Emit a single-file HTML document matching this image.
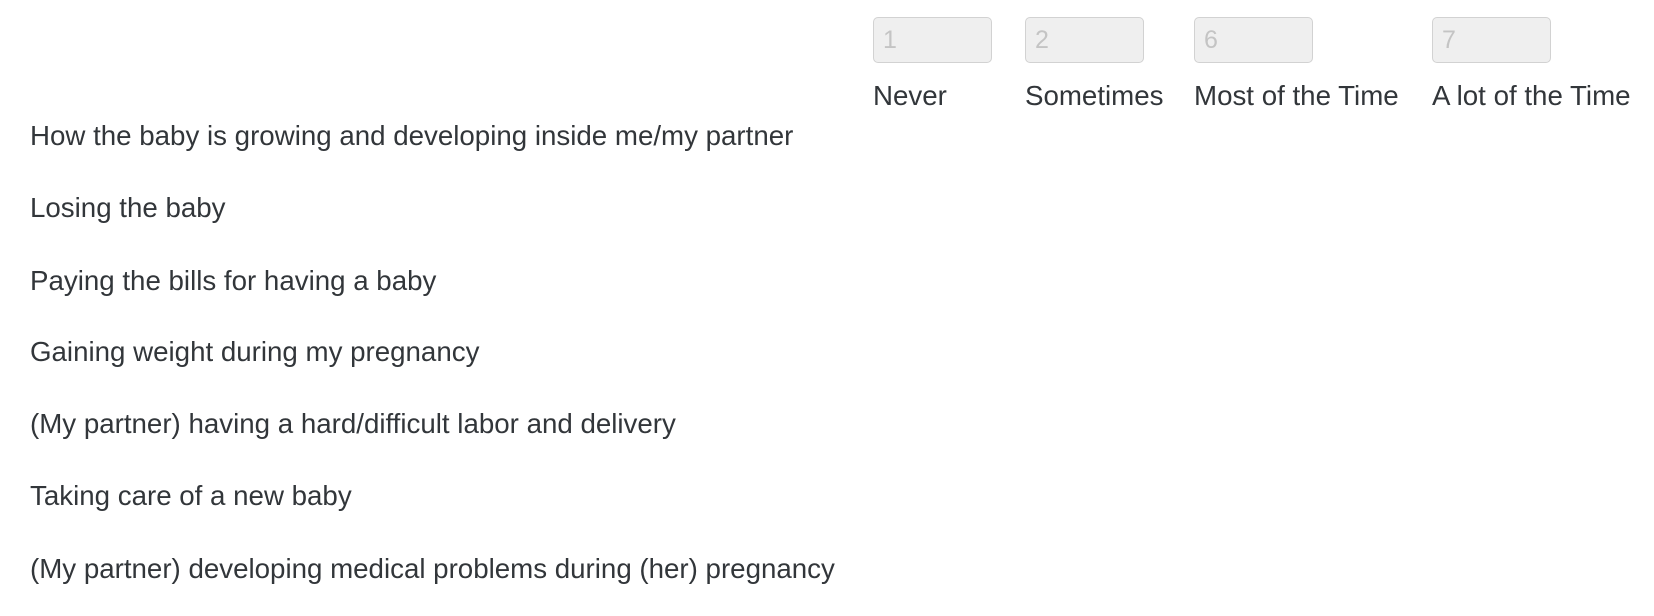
<!DOCTYPE html>
<html><head><style>
body{margin:0;width:1654px;height:616px;background:#fff;font-family:"Liberation Sans",sans-serif;color:#32363a;position:relative;overflow:hidden}
.box{position:absolute;top:17px;border:1px solid #d2d2d2;border-radius:5px;background:#efefef;color:#c4c4c4;font-size:25px;line-height:44px;padding-left:9px;box-sizing:border-box;width:119px;height:46px}
.lab{position:absolute;top:79px;font-size:27.7px;line-height:34px;white-space:nowrap}
.row{position:absolute;left:30px;font-size:27.7px;line-height:34px;white-space:nowrap}
</style></head><body>
<div class="box" style="left:873px">1</div>
<div class="box" style="left:1025px">2</div>
<div class="box" style="left:1194px">6</div>
<div class="box" style="left:1432px">7</div>
<div class="lab" style="left:873px">Never</div>
<div class="lab" style="left:1025px">Sometimes</div>
<div class="lab" style="left:1194px">Most of the Time</div>
<div class="lab" style="left:1432px">A lot of the Time</div>
<div class="row" style="top:119px">How the baby is growing and developing inside me/my partner</div>
<div class="row" style="top:191px">Losing the baby</div>
<div class="row" style="top:264px">Paying the bills for having a baby</div>
<div class="row" style="top:335px">Gaining weight during my pregnancy</div>
<div class="row" style="top:407px">(My partner) having a hard/difficult labor and delivery</div>
<div class="row" style="top:479px">Taking care of a new baby</div>
<div class="row" style="top:552px">(My partner) developing medical problems during (her) pregnancy</div>
</body></html>
